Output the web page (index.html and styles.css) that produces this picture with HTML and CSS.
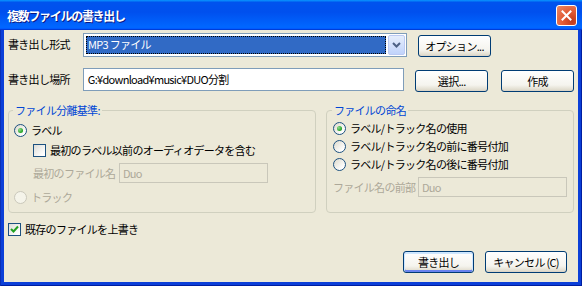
FILE: index.html
```html
<!DOCTYPE html>
<html lang="ja">
<head>
  <meta charset="UTF-8">
  <title>複数ファイルの書き出し</title>
  <link rel="stylesheet" href="styles.css">
</head>
<body>
  <div class="window">
    <div class="titlebar">
      <span class="title">複数ファイルの書き出し</span>
      <button class="close" aria-label="閉じる">
        <svg width="11" height="11" viewBox="0 0 11 11"><path d="M1.5 1.5 L9.5 9.5 M9.5 1.5 L1.5 9.5" stroke="#fff" stroke-width="2" stroke-linecap="square"/></svg>
      </button>
    </div>

    <div class="client">
      <!-- format -->
      <div class="row row-format">
        <span class="label">書き出し形式</span>
        <div class="combo">
          <span class="combo-value">MP3 ファイル</span>
          <span class="combo-arrow">
            <svg width="9" height="6" viewBox="0 0 9 6"><path d="M1 1 L4.5 4.5 L8 1" fill="none" stroke="#4d6185" stroke-width="2"/></svg>
          </span>
        </div>
        <button class="btn btn-side">オプション...</button>
      </div>

      <!-- location -->
      <div class="row row-path">
        <span class="label">書き出し場所</span>
        <div class="textbox">G:¥download¥music¥DUO分割</div>
        <button class="btn btn-side">選択...</button>
        <button class="btn btn-side">作成</button>
      </div>

      <div class="groups">
        <fieldset class="group group-split">
          <legend>ファイル分離基準:</legend>
          <div class="opt opt-first"><span class="radio checked"></span>ラベル</div>
          <div class="opt opt-sub"><span class="check"></span>最初のラベル以前のオーディオデータを含む</div>
          <div class="field field-sub">
            <span class="field-label">最初のファイル名</span>
            <div class="textbox disabled">Duo</div>
          </div>
          <div class="opt opt-last disabled"><span class="radio"></span>トラック</div>
        </fieldset>

        <fieldset class="group group-name">
          <legend>ファイルの命名</legend>
          <div class="opt opt-first"><span class="radio checked"></span>ラベル/トラック名の使用</div>
          <div class="opt"><span class="radio"></span>ラベル/トラック名の前に番号付加</div>
          <div class="opt"><span class="radio"></span>ラベル/トラック名の後に番号付加</div>
          <div class="field">
            <span class="field-label">ファイル名の前部</span>
            <div class="textbox disabled">Duo</div>
          </div>
        </fieldset>
      </div>

      <div class="opt overwrite">
        <span class="check checked">
          <svg width="11" height="11" viewBox="0 0 11 11"><path d="M2 5 L4.5 7.5 L9 2.5" fill="none" stroke="#21a121" stroke-width="2"/></svg>
        </span>既存のファイルを上書き
      </div>

      <div class="actions">
        <button class="btn btn-default">書き出し</button>
        <button class="btn btn-cancel">キャンセル (C)</button>
      </div>
    </div>
  </div>
</body>
</html>
```

FILE: styles.css
```css
body {
  margin: 0;
  font-family: "Noto Sans CJK JP", "Liberation Sans", sans-serif;
  font-size: 11px;
  letter-spacing: -0.7px;
  color: #000;
  background: #fff;
}

.window {
  width: 582px;
  height: 286px;
  display: flex;
  flex-direction: column;
  background: #0b3fd8;
  box-shadow: inset 1px 0 #0a2fb5, inset -1px 0 #001ea0, inset 0 -1px #001ea0;
}

.titlebar {
  height: 30px;
  display: flex;
  align-items: center;
  justify-content: space-between;
  padding: 0 5px 0 7px;
  background: linear-gradient(180deg, #0997ff, #0053ee 8%, #0050ee 40%, #0066ff 88%, #0066ff 93%, #005bff 95%, #003dd7 96%, #003dd7);
}

.title {
  color: #fff;
  font-weight: bold;
  font-size: 12px;
  letter-spacing: -1.3px;
  text-shadow: 1px 1px #0a1883;
  margin-top: 1px;
}

.close {
  width: 21px;
  height: 21px;
  margin-top: 1px;
  padding: 0;
  display: flex;
  align-items: center;
  justify-content: center;
  border: 1px solid #fff;
  border-radius: 3px;
  background: radial-gradient(circle at 80% 80%, #c03a1c, #e25b35 45%, #ec8a67);
}

.client {
  flex: 1;
  margin: 0 4px 4px;
  padding: 3px 4px 0;
  background: #ece9d8;
}

.row {
  display: flex;
  align-items: flex-start;
}

.label {
  width: 75px;
  line-height: 22px;
}

.row-path {
  margin-top: 11px;
}

.combo {
  width: 320px;
  height: 20px;
  display: flex;
  align-items: stretch;
  padding: 1px;
  background: #fff;
  border: 1px solid #7f9db9;
  margin-right: 11px;
}

.combo-value {
  flex: 1;
  margin: 1px 2px 1px 1px;
  padding-left: 2px;
  background: #316ac5;
  color: #fff;
  line-height: 16px;
  outline: 1px dotted #000;
  outline-offset: -1px;
}

.combo-arrow {
  width: 15px;
  display: flex;
  align-items: center;
  justify-content: center;
  border: 1px solid #bccaf3;
  border-radius: 2px;
  background: linear-gradient(#e6eefc, #c1d3fb);
}

.textbox {
  width: 316px;
  height: 21px;
  padding-left: 4px;
  line-height: 21px;
  background: #fff;
  border: 1px solid #7f9db9;
  margin-right: 11px;
  white-space: nowrap;
}

.btn {
  font: inherit;
  letter-spacing: inherit;
  color: #000;
  height: 22px;
  padding: 0;
  border: 1px solid #003c74;
  border-radius: 3px;
  background: linear-gradient(#ffffff, #f5f4ee 70%, #e2ded0 92%, #d6d0c5);
}

.btn-side {
  width: 73px;
  margin-top: 2px;
}

.row-path .btn-side + .btn-side {
  margin-left: 13px;
}

.groups {
  display: flex;
  gap: 10px;
  margin-top: 11px;
  height: 110px;
}

.group {
  margin: 0;
  min-width: 0;
  border: 1px solid #d0d0bf;
  border-radius: 4px;
  box-sizing: border-box;
}

.group legend {
  color: #0046d5;
  padding: 0 2px;
  margin-left: -1px;
  line-height: 14px;
}

.group-split {
  width: 309px;
  padding: 0 4px 0 5px;
}

.group-name {
  width: 249px;
  padding: 0 4px 0 6px;
}

.opt {
  display: flex;
  align-items: center;
  height: 18px;
  white-space: nowrap;
}

.group-split .opt-first {
  margin-top: 3px;
  height: 20px;
}

.group-split .opt-sub {
  height: 20px;
  padding-left: 19px;
}

.group-split .opt-last {
  margin-top: 4px;
  height: 20px;
}

.group-name .opt-first {
  margin-top: 2px;
}

.radio {
  width: 11px;
  height: 11px;
  border: 1px solid #1c5180;
  border-radius: 50%;
  margin-right: 4px;
  background: linear-gradient(135deg, #dcd9cb, #ffffff 80%);
  display: flex;
  align-items: center;
  justify-content: center;
}

.radio.checked::after {
  content: "";
  width: 5px;
  height: 5px;
  border-radius: 50%;
  background: radial-gradient(circle at 35% 35%, #8fdc8f, #21a121 70%);
}

.opt.disabled {
  color: #aca899;
}

.opt.disabled .radio {
  border-color: #cac8bb;
  background: #f5f4ea;
}

.check {
  width: 11px;
  height: 11px;
  border: 1px solid #1c5180;
  margin-right: 4px;
  background: linear-gradient(135deg, #dcdcd7, #ffffff 85%);
  display: flex;
  align-items: center;
  justify-content: center;
}

.field {
  display: flex;
  align-items: center;
  margin-top: 4px;
  color: #aca899;
  white-space: nowrap;
}

.field-sub {
  padding-left: 19px;
  margin-top: 3px;
}

.field-label {
  width: 86px;
}

.field .textbox.disabled {
  width: 144px;
  height: 18px;
  line-height: 18px;
  padding-left: 3px;
  margin: 0;
  background: #ece9d8;
  border-color: #c9c7ba;
  color: #aca899;
}

.group-name .field-label {
  width: 85px;
}

.overwrite {
  margin-top: 8px;
  height: 16px;
}

.actions {
  display: flex;
  justify-content: flex-end;
  gap: 11px;
  margin-top: 14px;
  padding-right: 7px;
}

.btn-default {
  width: 71px;
  box-shadow: inset 0 1px 0 1px #cee7ff, inset 0 -1px 0 1px #6982ee;
}

.btn-cancel {
  width: 82px;
}
```
